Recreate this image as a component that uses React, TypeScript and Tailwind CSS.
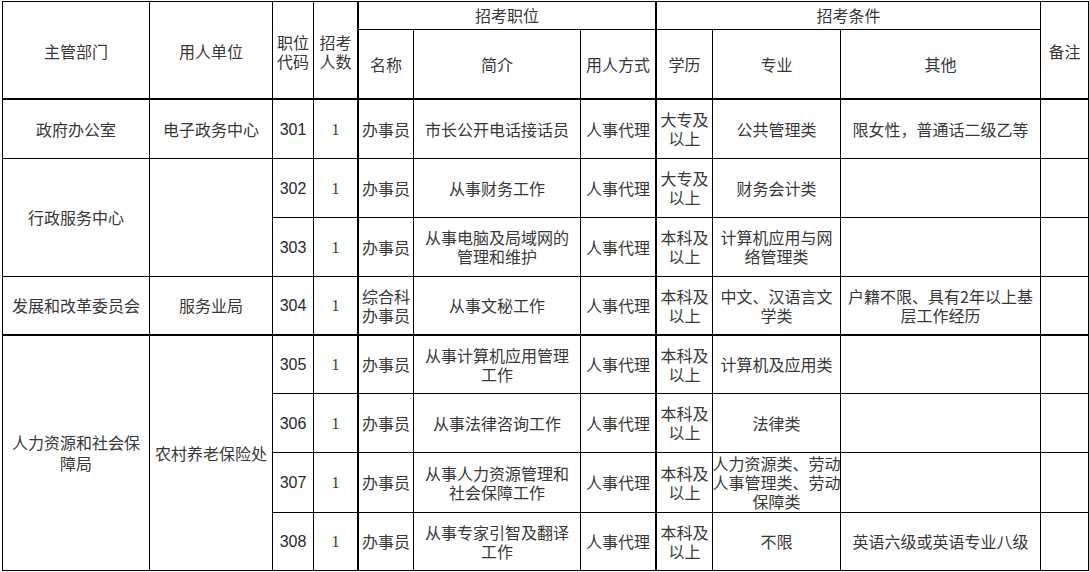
import type { ReactNode } from 'react';

const cjk = "font-['Noto_Sans_CJK_SC',_sans-serif]";

interface CellProps {
  children?: ReactNode;
  className?: string;
}

function Cell({ children, className = '' }: CellProps) {
  return (
    <div
      className={`flex items-center justify-center text-center border-r border-b border-black px-[2px] text-[16px] leading-[19px] ${className}`}
    >
      <div>{children}</div>
    </div>
  );
}

function Code({ n, last = false }: { n: string; last?: boolean }) {
  return (
    <Cell className={`font-['Liberation_Sans',_sans-serif] text-[15px] text-[#2a2a2a] ${last ? 'border-b-2' : ''}`}>
      {n}
    </Cell>
  );
}

function One({ last = false }: { last?: boolean }) {
  return (
    <Cell className={`border-r-2 font-['Liberation_Serif',_serif] text-[15px] ${last ? 'border-b-2' : ''}`}>
      1
    </Cell>
  );
}

function Degree({ text, last = false }: { text: string; last?: boolean }) {
  return (
    <Cell className={`text-[15px] leading-[18px] ${last ? 'border-b-2' : ''}`}>
      {text}
      <br />
      以上
    </Cell>
  );
}

export default function App() {
  return (
    <div className="min-h-[572px] w-[1089px] bg-white pt-[1px] pl-[2px]">
      <div
        className={`grid w-[1087px] grid-cols-[147px_123px_41px_45px_55px_167px_76px_56px_128px_200px_48px] grid-rows-[28px_70px_59px_59px_59px_59px_58px_59px_60px_58px] border-t border-l border-black text-[#383838] ${cjk}`}
      >
        {/* header */}
        <Cell className="row-span-2 border-b-2 pt-[3px]">主管部门</Cell>
        <Cell className="row-span-2 border-b-2 pt-[3px]">用人单位</Cell>
        <Cell className="row-span-2 border-b-2 pt-[3px]">
          职位
          <br />
          代码
        </Cell>
        <Cell className="row-span-2 border-b-2 border-r-2 pt-[3px]">
          招考
          <br />
          人数
        </Cell>
        <Cell className="col-span-3 border-r-2">招考职位</Cell>
        <Cell className="col-span-3">招考条件</Cell>
        <Cell className="row-span-2 border-b-2 pt-[3px]">备注</Cell>
        <Cell className="border-b-2">名称</Cell>
        <Cell className="border-b-2">简介</Cell>
        <Cell className="border-b-2 border-r-2">用人方式</Cell>
        <Cell className="border-b-2">学历</Cell>
        <Cell className="border-b-2">专业</Cell>
        <Cell className="border-b-2">其他</Cell>

        {/* 301 */}
        <Cell>政府办公室</Cell>
        <Cell>电子政务中心</Cell>
        <Code n="301" />
        <One />
        <Cell>办事员</Cell>
        <Cell>市长公开电话接话员</Cell>
        <Cell className="border-r-2">人事代理</Cell>
        <Degree text="大专及" />
        <Cell>公共管理类</Cell>
        <Cell>限女性，普通话二级乙等</Cell>
        <Cell />

        {/* 302 / 303 */}
        <Cell className="row-span-2">行政服务中心</Cell>
        <Cell className="row-span-2" />
        <Code n="302" />
        <One />
        <Cell>办事员</Cell>
        <Cell>从事财务工作</Cell>
        <Cell className="border-r-2">人事代理</Cell>
        <Degree text="大专及" />
        <Cell>财务会计类</Cell>
        <Cell />
        <Cell />
        <Code n="303" />
        <One />
        <Cell>办事员</Cell>
        <Cell>
          从事电脑及局域网的
          <br />
          管理和维护
        </Cell>
        <Cell className="border-r-2">人事代理</Cell>
        <Degree text="本科及" />
        <Cell>
          计算机应用与网
          <br />
          络管理类
        </Cell>
        <Cell />
        <Cell />

        {/* 304 */}
        <Cell className="border-b-2">发展和改革委员会</Cell>
        <Cell className="border-b-2">服务业局</Cell>
        <Code n="304" last />
        <One last />
        <Cell className="border-b-2">
          综合科
          <br />
          办事员
        </Cell>
        <Cell className="border-b-2">从事文秘工作</Cell>
        <Cell className="border-b-2 border-r-2">人事代理</Cell>
        <Degree text="本科及" last />
        <Cell className="border-b-2">
          中文、汉语言文
          <br />
          学类
        </Cell>
        <Cell className="border-b-2">
          户籍不限、具有2年以上基
          <br />
          层工作经历
        </Cell>
        <Cell className="border-b-2" />

        {/* 305 - 308 */}
        <Cell className="row-span-4 leading-[21px]">
          人力资源和社会保
          <br />
          障局
        </Cell>
        <Cell className="row-span-4">农村养老保险处</Cell>
        <Code n="305" />
        <One />
        <Cell>办事员</Cell>
        <Cell>
          从事计算机应用管理
          <br />
          工作
        </Cell>
        <Cell className="border-r-2">人事代理</Cell>
        <Degree text="本科及" />
        <Cell>计算机及应用类</Cell>
        <Cell />
        <Cell />

        <Code n="306" />
        <One />
        <Cell>办事员</Cell>
        <Cell>从事法律咨询工作</Cell>
        <Cell className="border-r-2">人事代理</Cell>
        <Degree text="本科及" />
        <Cell>法律类</Cell>
        <Cell />
        <Cell />

        <Code n="307" />
        <One />
        <Cell>办事员</Cell>
        <Cell>
          从事人力资源管理和
          <br />
          社会保障工作
        </Cell>
        <Cell className="border-r-2">人事代理</Cell>
        <Degree text="本科及" />
        <Cell className="whitespace-nowrap text-[14px] leading-[17px]">
          人力资源类、劳动
          <br />
          人事管理类、劳动
          <br />
          保障类
        </Cell>
        <Cell />
        <Cell />

        <Code n="308" />
        <One />
        <Cell>办事员</Cell>
        <Cell>
          从事专家引智及翻译
          <br />
          工作
        </Cell>
        <Cell className="border-r-2">人事代理</Cell>
        <Degree text="本科及" />
        <Cell>不限</Cell>
        <Cell>英语六级或英语专业八级</Cell>
        <Cell />
      </div>
    </div>
  );
}
